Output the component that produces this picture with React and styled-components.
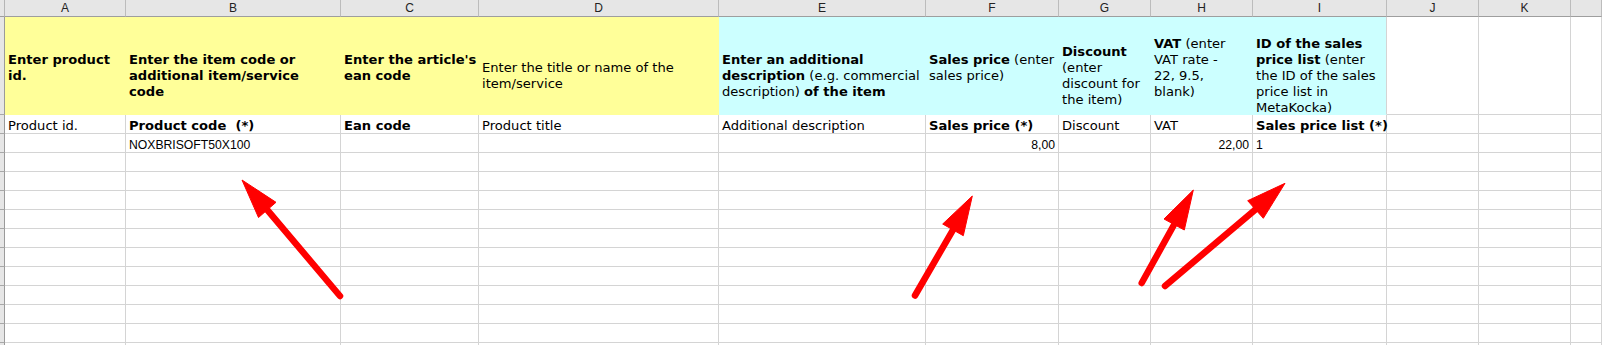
import React from "react";
import styled, { createGlobalStyle, css } from "styled-components";

const GlobalStyle = createGlobalStyle`
  html, body { margin: 0; padding: 0; background: #ffffff; overflow: hidden; }
  * { box-sizing: border-box; }
`;

const FILLS = { yellow: "#ffff99", cyan: "#ccffff" };
const GRID = "#d4d4d4";

const Sheet = styled.div`
  position: relative;
  width: 1602px;
  height: 345px;
  overflow: hidden;
  background: #ffffff;
`;

const Grid = styled.div`
  display: grid;
  grid-template-columns: 5px 121px 215px 138px 240px 207px 133px 92px 102px 134px 92px 92px 1fr;
  grid-template-rows: 17px 98px repeat(13, 19px);
`;

const Corner = styled.div`
  background: #e6e6e6;
  border-right: 1px solid #b5b5b5;
  border-bottom: 1px solid #9e9e9e;
`;

const ColHead = styled.div`
  background: #e6e6e6;
  border-right: 1px solid #bcbcbc;
  border-bottom: 1px solid #9e9e9e;
  display: flex;
  align-items: center;
  justify-content: center;
  font-family: "Liberation Sans", Arial, sans-serif;
  font-size: 12px;
  color: #222;
  line-height: 16px;
`;

const RowHead = styled.div`
  background: #e6e6e6;
  border-right: 1px solid #9a9a9a;
  border-bottom: 1px solid #a8a8a8;
`;

const Cell = styled.div`
  border-right: 1px solid ${GRID};
  border-bottom: 1px solid ${GRID};
  display: flex;
  flex-direction: column;
  justify-content: flex-end;
  align-items: ${(p) => (p.$right ? "flex-end" : "flex-start")};
  padding: 0 3px 0 3px;
  white-space: pre;
  overflow: visible;
  font-family: ${(p) =>
    p.$num ? '"Liberation Sans", Arial, sans-serif' : '"DejaVu Sans", Verdana, sans-serif'};
  font-size: ${(p) => (p.$num ? "12.2px" : "13.1px")};
  font-weight: ${(p) => (p.$bold ? "bold" : "normal")};
  line-height: 14px;
  color: #000;
  ${(p) =>
    p.$fill &&
    css`
      background: ${FILLS[p.$fill]};
      border-right-color: ${p.$edge ? GRID : FILLS[p.$fill]};
      border-bottom-color: ${FILLS[p.$fill]};
    `}
  ${(p) =>
    p.$top !== undefined &&
    css`
      justify-content: flex-start;
      line-height: 16px;
      padding-top: ${p.$top - 15}px;
    `}
`;

const B = styled.span`
  font-weight: bold;
`;

const Line = styled.span`
  display: block;
`;

const Overlay = styled.svg`
  position: absolute;
  left: 0;
  top: 0;
  width: 1602px;
  height: 345px;
  pointer-events: none;
`;

const COLS = ["A", "B", "C", "D", "E", "F", "G", "H", "I", "J", "K", ""];

const headerRow = [
  { fill: "yellow", top: 50, lines: [[["b", "Enter product"]], [["b", "id."]]] },
  {
    fill: "yellow",
    top: 50,
    lines: [[["b", "Enter the item code or"]], [["b", "additional item/service"]], [["b", "code"]]],
  },
  { fill: "yellow", top: 50, lines: [[["b", "Enter the article's"]], [["b", "ean code"]]] },
  { fill: "yellow", top: 58, lines: [[["n", "Enter the title or name of the"]], [["n", "item/service"]]] },
  {
    fill: "cyan",
    top: 50,
    lines: [
      [["b", "Enter an additional"]],
      [["b", "description"], ["n", " (e.g. commercial"]],
      [["n", "description) "], ["b", "of the item"]],
    ],
  },
  { fill: "cyan", top: 50, lines: [[["b", "Sales price"], ["n", " (enter"]], [["n", "sales price)"]]] },
  {
    fill: "cyan",
    top: 42,
    lines: [[["b", "Discount"]], [["n", "(enter"]], [["n", "discount for"]], [["n", "the item)"]]],
  },
  {
    fill: "cyan",
    top: 34,
    lines: [[["b", "VAT"], ["n", " (enter"]], [["n", "VAT rate -"]], [["n", "22, 9.5,"]], [["n", "blank)"]]],
  },
  {
    fill: "cyan",
    top: 34,
    edge: true,
    lines: [
      [["b", "ID of the sales"]],
      [["b", "price list"], ["n", " (enter"]],
      [["n", "the ID of the sales"]],
      [["n", "price list in"]],
      [["n", "MetaKocka)"]],
    ],
  },
  {},
  {},
  {},
];

const labelRow = [
  { t: "Product id." },
  { t: "Product code  (*)", bold: true },
  { t: "Ean code", bold: true },
  { t: "Product title" },
  { t: "Additional description" },
  { t: "Sales price (*)", bold: true },
  { t: "Discount" },
  { t: "VAT" },
  { t: "Sales price list (*)", bold: true },
  {},
  {},
  {},
];

const dataRow = [
  {},
  { t: "NOXBRISOFT50X100", num: true },
  {},
  {},
  {},
  { t: "8,00", num: true, right: true },
  {},
  { t: "22,00", num: true, right: true },
  { t: "1", num: true },
  {},
  {},
  {},
];

const emptyRow = COLS.map(() => ({}));
const bodyRows = [labelRow, dataRow, ...Array.from({ length: 11 }, () => emptyRow)];

const arrows = [
  { tail: [340, 296], tip: [242, 180], a: [258.5, 217.5], b: [276, 202.3] },
  { tail: [915, 295.5], tip: [972.3, 196], a: [942.7, 224], b: [963.3, 235.7] },
  { tail: [1141.7, 283], tip: [1193.3, 190], a: [1164, 219], b: [1184.3, 230] },
  { tail: [1165, 286], tip: [1285, 183.3], a: [1247.7, 200.7], b: [1263.3, 218.3] },
];

function Arrow({ tail, tip, a, b }) {
  const mid = [(a[0] + b[0]) / 2, (a[1] + b[1]) / 2];
  return (
    <g fill="#ff0000" stroke="#ff0000">
      <line
        x1={tail[0]}
        y1={tail[1]}
        x2={mid[0]}
        y2={mid[1]}
        strokeWidth="6.5"
        strokeLinecap="round"
      />
      <polygon points={`${tip[0]},${tip[1]} ${a[0]},${a[1]} ${b[0]},${b[1]}`} strokeWidth="1" />
    </g>
  );
}

export default function App() {
  return (
    <>
      <GlobalStyle />
      <Sheet>
        <Grid>
          <Corner />
          {COLS.map((c, i) => (
            <ColHead key={"h" + i}>{c}</ColHead>
          ))}

          <RowHead />
          {headerRow.map((c, i) => (
            <Cell key={"r1" + i} $fill={c.fill} $top={c.top} $edge={c.edge}>
              {c.lines &&
                c.lines.map((ln, j) => (
                  <Line key={j}>
                    {ln.map(([k, txt], m) =>
                      k === "b" ? <B key={m}>{txt}</B> : <React.Fragment key={m}>{txt}</React.Fragment>
                    )}
                  </Line>
                ))}
            </Cell>
          ))}

          {bodyRows.map((row, r) => (
            <React.Fragment key={"r" + r}>
              <RowHead />
              {row.map((c, i) => (
                <Cell key={i} $bold={c.bold} $num={c.num} $right={c.right}>
                  {c.t}
                </Cell>
              ))}
            </React.Fragment>
          ))}
        </Grid>
        <Overlay viewBox="0 0 1602 345">
          {arrows.map((a, i) => (
            <Arrow key={i} {...a} />
          ))}
        </Overlay>
      </Sheet>
    </>
  );
}
